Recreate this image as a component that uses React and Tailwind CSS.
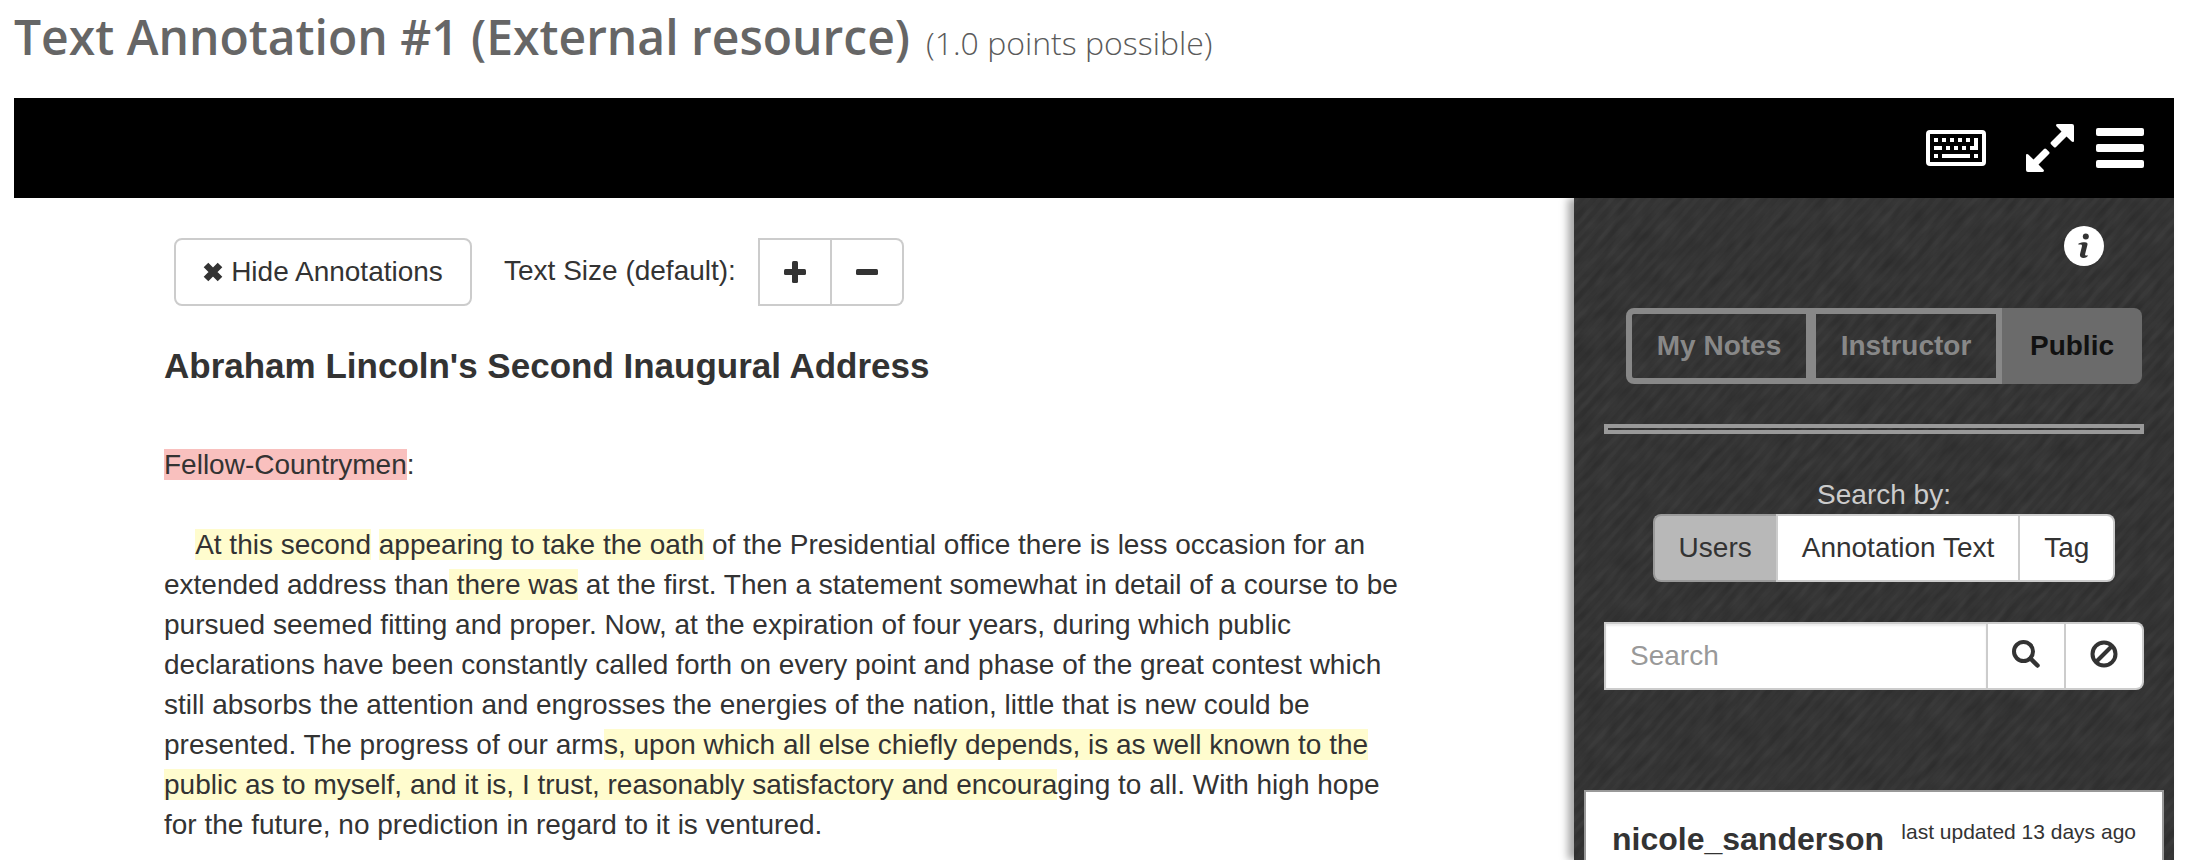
import React from "react";

const sans = "font-['Liberation_Sans',Arial,sans-serif]";

function KeyboardIcon() {
  const keys = [
    [8, 8, 4, 4], [16, 8, 4, 4], [24, 8, 4, 4], [32, 8, 4, 4], [40, 8, 4, 4],
    [8, 16, 8, 4], [20, 16, 4, 4], [28, 16, 4, 4], [36, 16, 4, 4],
    [8, 24, 4, 4], [16, 24, 28, 4], [48, 24, 4, 4],
  ];
  return (
    <svg width="60" height="36" viewBox="0 0 60 36" fill="#fff" aria-hidden="true">
      <rect x="2" y="2" width="56" height="32" rx="2" fill="none" stroke="#fff" strokeWidth="4" />
      {keys.map(([x, y, w, h]) => (
        <rect key={`${x}-${y}`} x={x} y={y} width={w} height={h} />
      ))}
      <path d="M48 8h4v12h-8v-4h4z" />
    </svg>
  );
}

function ExpandIcon() {
  const arrow =
    "M31.5 0H46a2 2 0 0 1 2 2v14.5c0 1.6-1.3 1.9-2.3 1L40.500 12.500 30 23a1.500 1.500 0 0 1-2.200 0L25 20.200a1.500 1.500 0 0 1 0-2.200L35.500 7.500 30.600 2.400C29.500 1.200 30 0 31.500 0z";
  return (
    <svg width="48" height="48" viewBox="0 0 48 48" fill="#fff" aria-hidden="true">
      <path d={arrow} />
      <path d={arrow} transform="rotate(180 24 24)" />
    </svg>
  );
}

function MenuIcon() {
  return (
    <svg width="48" height="40" viewBox="0 0 48 40" fill="#fff" aria-hidden="true">
      <rect width="48" height="8" rx="2" />
      <rect y="16" width="48" height="8" rx="2" />
      <rect y="32" width="48" height="8" rx="2" />
    </svg>
  );
}

function InfoIcon() {
  return (
    <svg width="40" height="40" viewBox="0 0 40 40" aria-hidden="true">
      <circle cx="20" cy="20" r="20" fill="#fff" />
      <circle cx="21.800" cy="10.500" r="3" fill="#333" />
      <path
        d="M14.500 17.500c2-.8 4-1.300 6.500-1.300 2 0 2.800 1 2.400 2.800l-2.200 8.700c-.3 1.300.1 1.900 1 1.900.6 0 1.200-.2 1.800-.3-.5 1.700-2.300 2.700-4.500 2.700-3 0-4-1.700-3.400-4.200l1.800-7.400c.3-1.300-.2-1.900-1.400-1.900-.7 0-1.300.1-2 .3z"
        fill="#333"
      />
    </svg>
  );
}

function CrossIcon() {
  return (
    <svg width="20" height="20" viewBox="0 0 20 20" aria-hidden="true">
      <path d="M3 3l14 14M17 3l-14 14" stroke="#333" strokeWidth="6.500" />
    </svg>
  );
}

function PlusIcon() {
  return (
    <svg width="22" height="22" viewBox="0 0 22 22" fill="#333" aria-hidden="true">
      <rect x="8" width="6" height="22" rx="1.500" />
      <rect y="8" width="22" height="6" rx="1.500" />
    </svg>
  );
}

function MinusIcon() {
  return (
    <svg width="22" height="22" viewBox="0 0 22 22" fill="#333" aria-hidden="true">
      <rect y="8" width="22" height="6" rx="1.500" />
    </svg>
  );
}

function SearchIcon() {
  return (
    <svg width="28" height="28" viewBox="0 0 28 28" fill="none" stroke="#333" aria-hidden="true">
      <circle cx="11.500" cy="11.500" r="9.500" strokeWidth="4" />
      <path d="M18.500 18.500l7 7" strokeWidth="4.500" strokeLinecap="round" />
    </svg>
  );
}

function BanIcon() {
  return (
    <svg width="28" height="28" viewBox="0 0 28 28" fill="none" stroke="#333" strokeWidth="4" aria-hidden="true">
      <circle cx="14" cy="14" r="11.500" />
      <path d="M6 22L22 6" />
    </svg>
  );
}

function Mark({ children }) {
  return <mark className="bg-[#fffcce] text-inherit">{children}</mark>;
}

function Texture() {
  return (
    <svg className="absolute inset-0 h-full w-full" aria-hidden="true">
      <filter id="twill" x="0" y="0" width="100%" height="100%">
        <feTurbulence type="fractalNoise" baseFrequency="0.04 0.12" numOctaves="2" seed="4" />
        <feColorMatrix values="0 0 0 0 0  0 0 0 0 0  0 0 0 0 0  0.300 0 0 0 -0.070" />
      </filter>
      <pattern id="ribs" width="9" height="9" patternUnits="userSpaceOnUse" patternTransform="rotate(-48)">
        <rect width="9" height="4" fill="#fff" fillOpacity="0.020" />
      </pattern>
      <rect width="100%" height="100%" fill="url(#ribs)" />
      <rect x="-700" y="-700" width="2000" height="2000" transform="rotate(-48 300 300)" filter="url(#twill)" />
    </svg>
  );
}

function Sidebar() {
  return (
    <aside className="relative w-[600px] shrink-0 bg-[#373737] shadow-[-6px_0_8px_rgba(0,0,0,0.350)]">
      <Texture />
      <div className="relative flex flex-col px-[10px]">
        <button aria-label="Information" className="mt-7 mr-[60px] self-end">
          <InfoIcon />
        </button>

        <div className="mt-[42px] mr-[22px] flex h-[76px] self-end text-[28px] font-bold text-[#888]">
          <button className="w-[185px] rounded-l-lg border-6 border-r-5 border-[#888]">My Notes</button>
          <button className="w-[191px] border-6 border-l-5 border-[#888]">Instructor</button>
          <button className="w-[140px] rounded-r-lg bg-[#6b6b6b] text-[#111]">Public</button>
        </div>

        <hr className="mx-5 mt-10 h-[10px] border-4 border-[#999]" />

        <div className="mt-[54px] flex flex-col items-center pl-5 text-[28px] text-[#333]">
          <p className="h-[26px] leading-[14px] text-[#ccc]" id="search-by">
            Search by:
          </p>
          <div role="group" aria-labelledby="search-by" className="flex h-[68px]">
            <button className="rounded-l-lg border-2 border-r-0 border-[#999] bg-[#b8b8b8] px-6">Users</button>
            <button className="border-2 border-[#ccc] bg-white px-6">Annotation Text</button>
            <button className="rounded-r-lg border-2 border-l-0 border-[#ccc] bg-white px-6">Tag</button>
          </div>
        </div>

        <div className="mx-5 mt-10 flex h-[68px]">
          <input
            type="text"
            aria-label="Search"
            placeholder="Search"
            className="min-w-0 flex-1 border-2 border-[#ccc] bg-white px-6 text-[28px] text-[#333] shadow-[inset_0_2px_2px_rgba(0,0,0,0.075)] placeholder:text-[#999]"
          />
          <button aria-label="Run search" className="flex w-[78px] items-start justify-center border-y-2 border-r-2 border-[#ccc] bg-white pt-4">
            <SearchIcon />
          </button>
          <button aria-label="Clear search" className="flex w-[78px] items-start justify-center rounded-r-lg border-y-2 border-r-2 border-[#ccc] bg-white pt-4">
            <BanIcon />
          </button>
        </div>

        <article className="mt-[100px] h-[70px] overflow-hidden border-2 border-b-0 border-[#999] bg-white px-[26px] pt-7 text-[#333]">
          <div className="flex items-start justify-between whitespace-nowrap">
            <h3 className="text-[32px] leading-[38px] font-bold">nicole_sanderson</h3>
            <span className="text-[21px] leading-6">last updated 13 days ago</span>
          </div>
        </article>
      </div>
    </aside>
  );
}

export default function App() {
  return (
    <div className={`h-screen overflow-hidden bg-white pl-[14px] pr-[22px] text-[#333] ${sans}`}>
      <header className="flex h-[98px] items-baseline gap-4 font-['Open_Sans',sans-serif] text-[#666]">
        <h1 className="text-[48px] leading-[74px] font-semibold">Text Annotation #1 (External resource)</h1>
        <p className="text-[32px] font-light text-[#5a5a5a]">(1.0 points possible)</p>
      </header>

      <nav className="flex h-[100px] items-center justify-end bg-black pr-[30px]">
        <button aria-label="Keyboard" className="mr-10"><KeyboardIcon /></button>
        <button aria-label="Full screen" className="mr-[22px]"><ExpandIcon /></button>
        <button aria-label="Menu"><MenuIcon /></button>
      </nav>

      <div className="flex">
        <main className="min-w-0 flex-1 pl-[150px] pr-40 pt-10 text-[28px] leading-10">
          <div className="flex h-[68px] pl-[10px]">
            <button className="flex w-[298px] items-center justify-center gap-2 rounded-lg border-2 border-[#ccc]">
              <CrossIcon />
              Hide Annotations
            </button>
            <span className="ml-8 leading-[66px]" id="text-size">Text Size (default):</span>
            <div role="group" aria-labelledby="text-size" className="ml-[22px] flex">
              <button aria-label="Increase" className="flex w-[74px] items-center justify-center border-2 border-[#ccc]">
                <PlusIcon />
              </button>
              <button aria-label="Decrease" className="flex w-[72px] items-center justify-center rounded-r-lg border-2 border-l-0 border-[#ccc]">
                <MinusIcon />
              </button>
            </div>
          </div>

          <h2 className="mt-10 text-[35px] leading-10 font-bold">Abraham Lincoln's Second Inaugural Address</h2>
          <p className="mt-[59px]">
            <mark className="bg-[#f9c0be] text-inherit">Fellow-Countrymen</mark>:
          </p>
          <p className="mt-10">
            {"\u00a0\u00a0\u00a0\u00a0"}
            <Mark>At this second</Mark> <Mark>appearing to take the oath</Mark> of the Presidential office there is less
            occasion for an extended address than<Mark> there was</Mark> at the first. Then a statement somewhat in
            detail of a course to be pursued seemed fitting and proper. Now, at the expiration of four years, during
            which public declarations have been constantly called forth on every point and phase of the great contest
            which still absorbs the attention and engrosses the energies of the nation, little that is new could be
            presented. The progress of our arm
            <Mark>
              s, upon which all else chiefly depends, is as well known to the public as to myself, and it is, I trust,
              reasonably satisfactory and encoura
            </Mark>
            ging to all. With high hope for the future, no prediction in regard to it is ventured.
          </p>
        </main>
        <Sidebar />
      </div>
    </div>
  );
}
